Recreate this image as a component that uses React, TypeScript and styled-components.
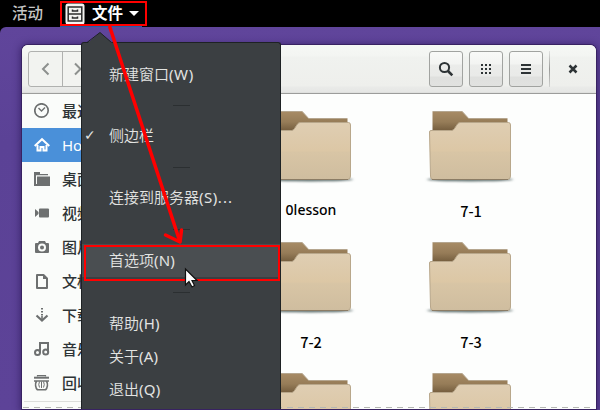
import React from "react";
import styled, { createGlobalStyle, css } from "styled-components";

const Global = createGlobalStyle`
  * { box-sizing: border-box; }
  body { margin: 0; overflow: hidden; background: #000; }
`;

const Screen = styled.div`
  position: relative;
  width: 600px;
  height: 410px;
  overflow: hidden;
  display: flex;
  flex-direction: column;
  background: #000;
  font-family: "Noto Sans", "Noto Sans CJK SC", sans-serif;
  font-size: 15px;
`;

const TopBar = styled.header`
  display: flex;
  align-items: center;
  flex: 0 0 27px;
  height: 27px;
  padding-left: 12px;
  color: #fff;
  line-height: 26px;
`;

const Activities = styled.span`
  width: 53px;
  height: 27px;
  font-size: 15.5px;
  font-weight: 500;
  color: #c6c6c6;
`;

const AppButton = styled.div`
  display: flex;
  align-items: center;
  height: 27px;
  gap: 7px;
  font-weight: 700;

  span { width: 32px; font-size: 15.5px; height: 27px; }
  svg { display: block; }
`;

const Caret = styled.i`
  border: 5px solid transparent;
  border-top-color: #fff;
  border-bottom: 0;
  margin-left: -2px;
`;

const Desktop = styled.main`
  flex: 1;
  min-height: 0;
  padding: 18px 4px 1px 22px;
  background: linear-gradient(#60459b, #5b4296 30%, #5d4398);
  border-top-left-radius: 6px;
`;

const Window = styled.section`
  display: flex;
  flex-direction: column;
  height: 364px;
  overflow: hidden;
  background: #fdfefd;
  border-radius: 6px 6px 0 0;
  box-shadow: 0 0 0 1px #382262, 0 1px 7px 2px rgba(30, 12, 70, 0.5);
`;

const HeaderBar = styled.div`
  display: flex;
  flex: 0 0 49px;
  padding: 6px 0 0 6px;
  background: linear-gradient(#f6f8f5 0, #f3f5f2 11px, #f0f2ef 12px, #eeefec 41px, #e9eae8 42px, #e6e7e5 47px, #d8d9d7 48px);
  border-bottom: 1px solid #9c9d9b;
`;

const buttonFace = css`
  border: 1px solid #a1a3a0;
  border-radius: 3px;
  background: linear-gradient(#f9faf8 0, #f3f4f2 12px, #ebecea 13px, #e9eae8 24px, #dfe0de 25px, #e1e2e0 100%);
`;

const NavGroup = styled.div`
  display: flex;
  width: 68px;
  height: 36px;
  border: 1px solid #b0b1af;
  border-radius: 3px;
  background: #f2f3f0;
`;

const NavButton = styled.div`
  display: flex;
  flex: 1;
  align-items: center;
  justify-content: center;
  & + & { border-left: 1px solid #b0b1af; }
`;

const Tools = styled.div`
  display: flex;
  margin-left: auto;
  gap: 6px;
`;

const ToolButton = styled.div`
  display: flex;
  align-items: center;
  justify-content: center;
  width: 34px;
  height: 36px;
  ${buttonFace}
`;

const CloseArea = styled.div`
  display: flex;
  align-items: center;
  justify-content: center;
  width: 47px;
  height: 36px;
  border-left: 1px solid;
  border-image: linear-gradient(#e5e6e4, #999a98 50%, #d5d6d4) 1;
`;

const Body = styled.div`
  display: flex;
  flex: 1;
  min-height: 0;
`;

const Sidebar = styled.nav`
  flex: 0 0 148px;
  background: #fafcfa;
`;

const Place = styled.div<{ $active?: boolean }>`
  display: flex;
  align-items: center;
  height: 34px;
  padding-left: 12px;
  gap: 12px;
  line-height: 34px;
  white-space: nowrap;
  color: ${(p) => (p.$active ? "#fff" : "#2e3436")};
  background: ${(p) => (p.$active ? "#4a90d9" : "transparent")};

  svg { flex: none; color: ${(p) => (p.$active ? "#fff" : "#6d7070")}; }
  span { height: 34px; font-weight: ${(p) => (p.$active ? 400 : 500)}; }
`;

const PlaceDivider = styled.div`
  height: 1px;
  margin: 1px 2px 0;
  background: #dcdedb;
`;

const Files = styled.div`
  display: grid;
  flex: 1;
  grid-template-columns: 160px 160px;
  grid-auto-rows: 131px;
  padding-left: 61px;
  overflow: hidden;
`;

const Folder = styled.div`
  display: flex;
  flex-direction: column;
  align-items: center;
  padding-top: 15px;

  svg { display: block; margin-left: -2px; }
`;

const FolderName = styled.span<{ $soft?: boolean }>`
  margin-top: ${(p) => (p.$soft ? "16px" : "17px")};
  line-height: 20px;
  font-family: ${(p) => (p.$soft ? '"Noto Sans", sans-serif' : '"Noto Sans CJK SC", "Noto Sans", sans-serif')};
  font-size: ${(p) => (p.$soft ? "14px" : "14.5px")};
  font-weight: 500;
  color: #000;
`;

const AppMenu = styled.div`
  position: absolute;
  left: 81px;
  top: 42px;
  width: 200px;
  height: 367px;
  padding-top: 15px;
  background: #3b3f42;
  border: 1px solid #1e2224;
  border-bottom: 0;
  border-radius: 3px 3px 0 0;
`;

const MenuPointer = styled.svg`
  position: absolute;
  left: 4px;
  top: -12px;
`;

const MenuItem = styled.div<{ $hot?: boolean }>`
  display: flex;
  height: 33px;
  line-height: 32px;
  color: #e3e4e2;
  font-size: 15px;
  font-weight: 350;
  white-space: nowrap;
  background: ${(p) => (p.$hot ? "#4a4e51" : "transparent")};
`;

const Mark = styled.span`
  width: 27px;
  padding-left: 2px;
  font-family: "DejaVu Sans", sans-serif;
  font-size: 14px;
`;

const Mnemonic = styled.span<{ $spacing?: number }>`
  font-weight: 400;
  letter-spacing: ${(p) => p.$spacing ?? 0.2}px;
`;

const MenuSeparator = styled.div<{ $h: number }>`
  display: flex;
  align-items: center;
  justify-content: center;
  height: ${(p) => p.$h}px;
  padding-top: 1px;

  &::after {
    content: "";
    width: 17px;
    height: 1px;
    background: #2b2f31;
  }
`;

const Annotations = styled.svg`
  position: absolute;
  inset: 0;
`;

const WindowEdge = styled.svg`
  position: absolute;
  left: 22px;
  top: 406px;
`;

const FolderArt = () => (
  <svg width="92" height="75" viewBox="0 0 92 75">
    <defs>
      <linearGradient id="back" x1="0" y1="0" x2="0" y2="1">
        <stop offset="0" stopColor="#a88c66" />
        <stop offset="0.55" stopColor="#967c58" />
        <stop offset="1" stopColor="#735c3d" />
      </linearGradient>
      <linearGradient id="front" x1="0" y1="0" x2="0" y2="1">
        <stop offset="0" stopColor="#dfceb3" />
        <stop offset="0.5" stopColor="#dcc7a5" />
        <stop offset="0.52" stopColor="#d8c5a5" />
        <stop offset="1" stopColor="#cfbd9f" />
      </linearGradient>
      <filter id="soft" x="-10%" y="-200%" width="120%" height="500%">
        <feGaussianBlur stdDeviation="1.5 1" />
      </filter>
    </defs>
    <ellipse cx="46" cy="70.5" rx="43" ry="2" fill="#637372" filter="url(#soft)" />
    <path d="M8.5 22V2.5Q8.500 2 9 2H38L44.500 9H83Q83.500 9 83.500 10V22Z" fill="url(#back)" />
    <path d="M9 2.500H38L44.500 9.500H83" fill="none" stroke="#b5a68f" />
    <path d="M5.500 23Q5.500 21.500 7 21.500H27.500Q29.500 21.500 30.500 19.500L33.500 15Q34.500 13.500 36.500 13.500H84.500Q86.500 13.500 86.500 16V67Q86.500 70.500 83.500 70.500H9Q6.500 70.500 6.500 67Z" fill="url(#front)" stroke="#b8a78b" />
    <path d="M8 70.500H84" stroke="#8b7c65" />
  </svg>
);

const PlaceIcon = ({ kind }: { kind: string }) => {
  const stroke = { fill: "none", stroke: "currentColor", strokeWidth: 2 };
  return (
    <svg width="16" height="16" viewBox="0 0 16 16">
      {kind === "recent" && (
        <>
          <circle cx="7.500" cy="7.500" r="6.700" {...stroke} strokeWidth="1.700" />
          <path d="M4.500 5L7.500 8L11 4.500" {...stroke} strokeWidth="1.400" />
        </>
      )}
      {kind === "home" && (
        <>
          <path d="M0.700 9L8 2.200L15.300 9" {...stroke} />
          <path d="M3.500 8V13.500H6.500V10H9.500V13.500H12.500V8" {...stroke} />
        </>
      )}
      {kind === "desktop" && (
        <>
          <path d="M0 1H6V3H14V4.300H2V14H0Z" fill="currentColor" />
          <path d="M3 5.500H16V15H3Z" fill="currentColor" />
          <path d="M0 13H3V15H0Z" fill="currentColor" />
        </>
      )}
      {kind === "video" && (
        <>
          <rect x="5" y="3.500" width="10" height="9" rx="1" fill="currentColor" />
          <path d="M1 4L4.500 7V9L1 12Z" fill="currentColor" />
        </>
      )}
      {kind === "picture" && (
        <path
          fillRule="evenodd"
          fill="currentColor"
          d="M5 2H11L12 4H14Q15 4 15 5V13Q15 14 14 14H2Q1 14 1 13V5Q1 4 2 4H4ZM8 4.500A4 4 0 1 0 8 12.500A4 4 0 1 0 8 4.500ZM8 6.500A2 2 0 1 1 8 10.500A2 2 0 1 1 8 6.500Z"
        />
      )}
      {kind === "document" && (
        <>
          <path d="M3 2H9.500L13 5.500V15H3Z" {...stroke} strokeLinejoin="round" />
          <path d="M9 1.500V6H13Z" fill="currentColor" />
        </>
      )}
      {kind === "download" && (
        <>
          <path d="M8 1V9" {...stroke} strokeDasharray="1.500 1.500" />
          <path d="M2.500 8.500L8 13.500L13.500 8.500" {...stroke} strokeWidth="2.200" />
          <path d="M8 9V14" {...stroke} strokeWidth="1.600" />
        </>
      )}
      {kind === "music" && (
        <>
          <path d="M6 12V2H14V11" {...stroke} />
          <circle cx="3.500" cy="11.500" r="2.500" {...stroke} />
          <circle cx="11.700" cy="11" r="2.500" {...stroke} />
        </>
      )}
      {kind === "trash" && (
        <>
          <path d="M0 2.700H15" {...stroke} />
          <path d="M3.500 1.500V0.600H11.500V1.500" {...stroke} strokeWidth="1.200" />
          <path d="M0 6H15M2.500 6C0.800 9 1.500 13 3.500 14.800H11.500C13.500 13 14.200 9 12.500 6" {...stroke} strokeWidth="1.600" />
          <path d="M5.500 6.500Q4 9.500 5.500 12.500M7.500 6.500V13M9.500 6.500Q11 9.500 9.500 12.500" {...stroke} strokeWidth="1" />
        </>
      )}
    </svg>
  );
};

const places = [
  ["recent", "最近使用"],
  ["home", "Home"],
  ["desktop", "桌面"],
  ["video", "视频"],
  ["picture", "图片"],
  ["document", "文档"],
  ["download", "下载"],
  ["music", "音乐"],
  ["trash", "回收站"],
];

const folders = ["0lesson", "7-1", "7-2", "7-3", "", ""];

export default function App() {
  return (
    <Screen>
      <Global />
      <TopBar>
        <Activities>活动</Activities>
        <AppButton>
          <svg width="20" height="22" viewBox="0 0 20 22">
            <rect x="0.500" y="0.500" width="19" height="21" rx="2.500" fill="#f3f3f0" />
            <g fill="none" stroke="#2b2c2b" strokeWidth="1.500">
              <rect x="3.200" y="4" width="13.600" height="14" />
              <path d="M3 11H17" />
              <path d="M7.500 6.500V8H12.500V6.500M7.500 13.500V15H12.500V13.500" />
            </g>
          </svg>
          <span>文件</span>
          <Caret />
        </AppButton>
      </TopBar>

      <Desktop>
        <Window>
          <HeaderBar>
            <NavGroup>
              <NavButton>
                <svg width="10" height="14" viewBox="0 0 10 14">
                  <path d="M8.500 1.500L3 7L8.500 12.500" fill="none" stroke="#8d908e" strokeWidth="2" />
                </svg>
              </NavButton>
              <NavButton>
                <svg width="10" height="14" viewBox="0 0 10 14">
                  <path d="M1 1.500L6.500 7L1 12.500" fill="none" stroke="#8d908e" strokeWidth="2" />
                </svg>
              </NavButton>
            </NavGroup>
            <Tools>
              <ToolButton>
                <svg width="16" height="16" viewBox="0 0 16 16" fill="none" stroke="#2e3436">
                  <circle cx="6.500" cy="6.500" r="4.600" strokeWidth="2" />
                  <path d="M10 10L14.300 14.300" strokeWidth="2.600" />
                </svg>
              </ToolButton>
              <ToolButton>
                <svg width="12" height="12" viewBox="0 0 12 12">
                  <path d="M1 2H11M1 6H11M1 10H11" stroke="#2e3436" strokeWidth="2" strokeDasharray="2 2" />
                </svg>
              </ToolButton>
              <ToolButton>
                <svg width="10" height="10" viewBox="0 0 10 10">
                  <path d="M0 1H10M0 5H10M0 9H10" stroke="#2e3436" strokeWidth="2" />
                </svg>
              </ToolButton>
              <CloseArea>
                <svg width="10" height="10" viewBox="0 0 10 10">
                  <path d="M1.500 1.500L8.500 8.500M8.500 1.500L1.500 8.500" stroke="#2e3436" strokeWidth="2.500" />
                </svg>
              </CloseArea>
            </Tools>
          </HeaderBar>
          <Body>
            <Sidebar>
              {places.map(([kind, label]) => (
                <Place key={kind} $active={kind === "home"}>
                  <PlaceIcon kind={kind} />
                  <span>{label}</span>
                </Place>
              ))}
              <PlaceDivider />
            </Sidebar>
            <Files>
              {folders.map((name, i) => (
                <Folder key={i}>
                  <FolderArt />
                  <FolderName $soft={i === 0}>{name}</FolderName>
                </Folder>
              ))}
            </Files>
          </Body>
        </Window>
      </Desktop>

      <WindowEdge width="574" height="4">
        <path d="M1 1.500H572" stroke="#b5b8b3" strokeDasharray="6 5" />
        <path d="M0 3.500H574" stroke="#382262" />
      </WindowEdge>

      <AppMenu>
        <MenuPointer width="28" height="14" viewBox="0 0 28 14">
          <path d="M1 12.500L14 1.500L27 12.500V14H1Z" fill="#3b3f42" />
          <path d="M1 11.500L14 1.500L25.500 11.500" fill="none" stroke="#1e2224" />
        </MenuPointer>
        <MenuItem><Mark />新建窗口<Mnemonic $spacing={0.6}>(W)</Mnemonic></MenuItem>
        <MenuSeparator $h={28} />
        <MenuItem><Mark>✓</Mark>侧边栏</MenuItem>
        <MenuSeparator $h={29} />
        <MenuItem><Mark />连接到服务器<Mnemonic $spacing={0.5}>(S)</Mnemonic><Mnemonic $spacing={1.1}>...</Mnemonic></MenuItem>
        <MenuSeparator $h={30} />
        <MenuItem $hot><Mark />首选项<Mnemonic>(N)</Mnemonic></MenuItem>
        <MenuSeparator $h={30} />
        <MenuItem><Mark />帮助<Mnemonic>(H)</Mnemonic></MenuItem>
        <MenuItem><Mark />关于<Mnemonic>(A)</Mnemonic></MenuItem>
        <MenuItem><Mark />退出<Mnemonic>(Q)</Mnemonic></MenuItem>
      </AppMenu>

      <Annotations width="600" height="410" viewBox="0 0 600 410" fill="none" stroke="#f00">
        <path d="M60 26.500H142" stroke="#1f5ea8" />
        <rect x="61" y="2" width="85" height="23" strokeWidth="2" />
        <rect x="85" y="246" width="194" height="34" strokeWidth="2" />
        <path d="M109.500 26L180 242" strokeWidth="3.500" />
        <path d="M165.500 235L180 242L181.500 230" strokeWidth="3.500" strokeLinecap="round" strokeLinejoin="round" />
        <path d="M185.500 269V285L189 281.500L192 287L194.500 285.500L192 280.500H197Z" fill="#fff" stroke="#111" strokeWidth="1.200" />
      </Annotations>
    </Screen>
  );
}
